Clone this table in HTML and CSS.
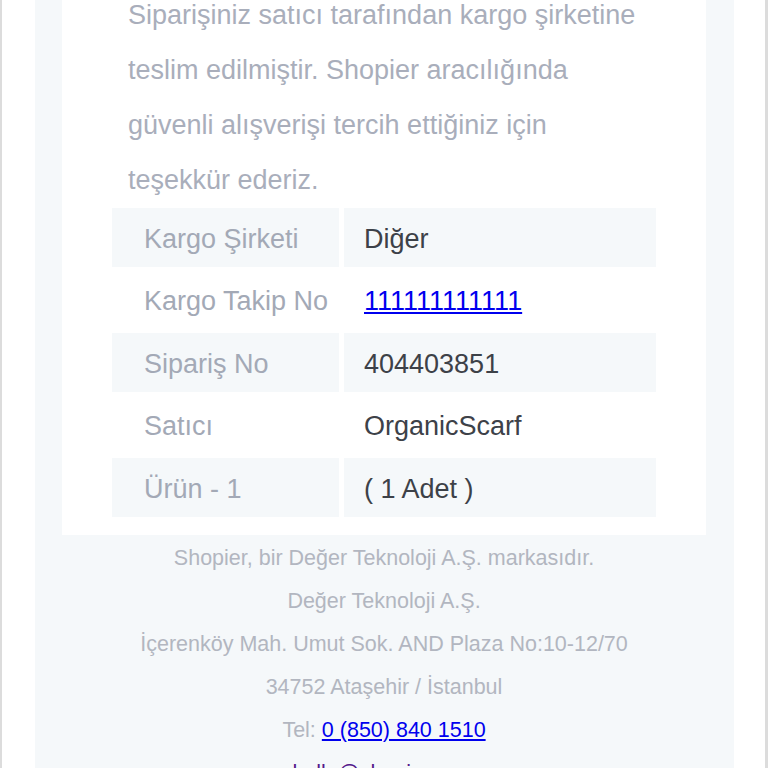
FILE: index.html
```html
<!DOCTYPE html>
<html lang="tr">
<head>
<meta charset="utf-8">
<title>Shopier</title>
<link rel="stylesheet" href="styles.css">
</head>
<body>
<div class="page">
  <div class="band">
    <div class="card">
      <p class="intro">Siparişiniz satıcı tarafından kargo şirketine teslim edilmiştir. Shopier aracılığında güvenli alışverişi tercih ettiğiniz için teşekkür ederiz.</p>
      <div class="details">
        <div class="label shade">Kargo Şirketi</div>
        <div class="value shade">Diğer</div>
        <div class="label">Kargo Takip No</div>
        <div class="value"><a class="link" href="#">111111111111</a></div>
        <div class="label shade">Sipariş No</div>
        <div class="value shade">404403851</div>
        <div class="label">Satıcı</div>
        <div class="value">OrganicScarf</div>
        <div class="label shade">Ürün - 1</div>
        <div class="value shade">( 1 Adet )</div>
      </div>
    </div>
    <div class="footer">
      <div class="fline">Shopier, bir Değer Teknoloji A.Ş. markasıdır.</div>
      <div class="fline">Değer Teknoloji A.Ş.</div>
      <div class="fline">İçerenköy Mah. Umut Sok. AND Plaza No:10-12/70</div>
      <div class="fline">34752 Ataşehir / İstanbul</div>
      <div class="fline">Tel: <a class="link" href="#">0 (850) 840 1510</a></div>
      <div class="fline"><a class="link visited" href="#">hello@shopier.com</a></div>
    </div>
  </div>
</div>
</body>
</html>
```

FILE: styles.css
```css
html, body {
  margin: 0;
  padding: 0;
  background: #ffffff;
  overflow: hidden;
}
body {
  font-family: "Liberation Sans", Arial, sans-serif;
}
.page {
  width: 768px;
  height: 768px;
  box-sizing: border-box;
  border-left: 2px solid #dcdcdc;
  border-right: 3px solid #dcdcdc;
  padding: 0 31px 0 33px;
  overflow: hidden;
}
.band {
  background: #f5f8fa;
  padding: 0 28px 0 27px;
  margin-top: -12px;
  min-height: 800px;
}
.card {
  background: #ffffff;
  padding: 0 50px 18px 50px;
}
.intro {
  margin: 0;
  padding: 0 10px 0 16px;
  font-size: 27px;
  line-height: 55px;
  color: #a9aebb;
}
.details {
  display: grid;
  grid-template-columns: 227px 1fr;
  grid-auto-rows: 58.5px;
  column-gap: 5px;
  row-gap: 4px;
}
.label, .value {
  display: flex;
  align-items: center;
  box-sizing: border-box;
  padding-top: 4px;
  font-size: 27px;
}
.label {
  padding-left: 32px;
  color: #a3a9b6;
}
.value {
  padding-left: 20px;
  color: #3d4148;
}
.shade {
  background: #f5f8fa;
}
.link {
  color: #0000ee;
  text-decoration: underline;
}
.visited {
  color: #551a8b;
}
.footer {
  padding-top: 2px;
  text-align: center;
  font-size: 21.5px;
  line-height: 43px;
  color: #b2b6c0;
}
```
